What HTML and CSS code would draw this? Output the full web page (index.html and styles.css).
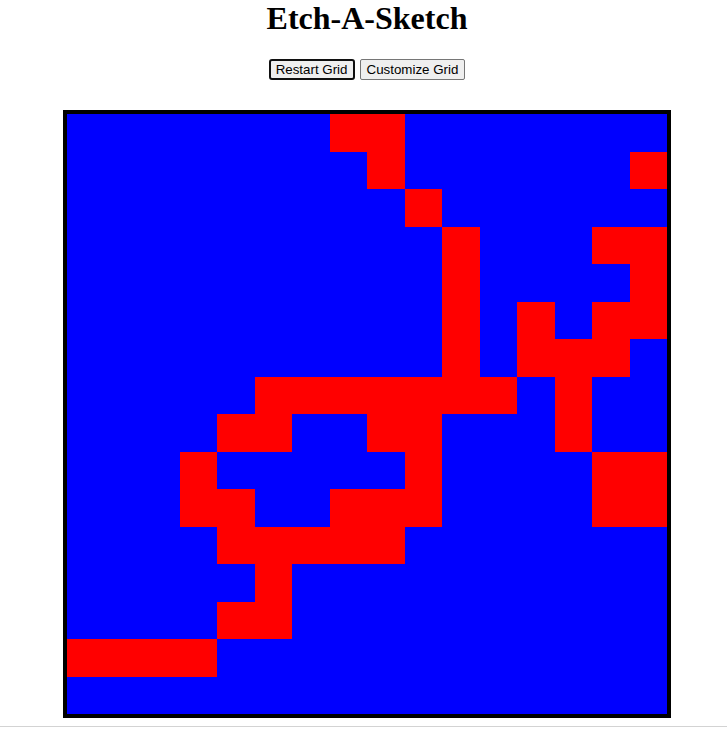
FILE: index.html
```html
<!DOCTYPE html>
<html>
<head>
<meta charset="utf-8">
<title>Etch-A-Sketch</title>
<link rel="stylesheet" href="styles.css">
</head>
<body>
<main class="page">
  <h1 class="title">Etch-A-Sketch</h1>
  <div class="controls">
    <button class="btn btn-focus">Restart Grid</button>
    <button class="btn">Customize Grid</button>
  </div>
  <div class="board">
    <div class="cell"></div><div class="cell"></div><div class="cell"></div><div class="cell"></div><div class="cell"></div><div class="cell"></div><div class="cell"></div><div class="cell red"></div><div class="cell red"></div><div class="cell"></div><div class="cell"></div><div class="cell"></div><div class="cell"></div><div class="cell"></div><div class="cell"></div><div class="cell"></div>
    <div class="cell"></div><div class="cell"></div><div class="cell"></div><div class="cell"></div><div class="cell"></div><div class="cell"></div><div class="cell"></div><div class="cell"></div><div class="cell red"></div><div class="cell"></div><div class="cell"></div><div class="cell"></div><div class="cell"></div><div class="cell"></div><div class="cell"></div><div class="cell red"></div>
    <div class="cell"></div><div class="cell"></div><div class="cell"></div><div class="cell"></div><div class="cell"></div><div class="cell"></div><div class="cell"></div><div class="cell"></div><div class="cell"></div><div class="cell red"></div><div class="cell"></div><div class="cell"></div><div class="cell"></div><div class="cell"></div><div class="cell"></div><div class="cell"></div>
    <div class="cell"></div><div class="cell"></div><div class="cell"></div><div class="cell"></div><div class="cell"></div><div class="cell"></div><div class="cell"></div><div class="cell"></div><div class="cell"></div><div class="cell"></div><div class="cell red"></div><div class="cell"></div><div class="cell"></div><div class="cell"></div><div class="cell red"></div><div class="cell red"></div>
    <div class="cell"></div><div class="cell"></div><div class="cell"></div><div class="cell"></div><div class="cell"></div><div class="cell"></div><div class="cell"></div><div class="cell"></div><div class="cell"></div><div class="cell"></div><div class="cell red"></div><div class="cell"></div><div class="cell"></div><div class="cell"></div><div class="cell"></div><div class="cell red"></div>
    <div class="cell"></div><div class="cell"></div><div class="cell"></div><div class="cell"></div><div class="cell"></div><div class="cell"></div><div class="cell"></div><div class="cell"></div><div class="cell"></div><div class="cell"></div><div class="cell red"></div><div class="cell"></div><div class="cell red"></div><div class="cell"></div><div class="cell red"></div><div class="cell red"></div>
    <div class="cell"></div><div class="cell"></div><div class="cell"></div><div class="cell"></div><div class="cell"></div><div class="cell"></div><div class="cell"></div><div class="cell"></div><div class="cell"></div><div class="cell"></div><div class="cell red"></div><div class="cell"></div><div class="cell red"></div><div class="cell red"></div><div class="cell red"></div><div class="cell"></div>
    <div class="cell"></div><div class="cell"></div><div class="cell"></div><div class="cell"></div><div class="cell"></div><div class="cell red"></div><div class="cell red"></div><div class="cell red"></div><div class="cell red"></div><div class="cell red"></div><div class="cell red"></div><div class="cell red"></div><div class="cell"></div><div class="cell red"></div><div class="cell"></div><div class="cell"></div>
    <div class="cell"></div><div class="cell"></div><div class="cell"></div><div class="cell"></div><div class="cell red"></div><div class="cell red"></div><div class="cell"></div><div class="cell"></div><div class="cell red"></div><div class="cell red"></div><div class="cell"></div><div class="cell"></div><div class="cell"></div><div class="cell red"></div><div class="cell"></div><div class="cell"></div>
    <div class="cell"></div><div class="cell"></div><div class="cell"></div><div class="cell red"></div><div class="cell"></div><div class="cell"></div><div class="cell"></div><div class="cell"></div><div class="cell"></div><div class="cell red"></div><div class="cell"></div><div class="cell"></div><div class="cell"></div><div class="cell"></div><div class="cell red"></div><div class="cell red"></div>
    <div class="cell"></div><div class="cell"></div><div class="cell"></div><div class="cell red"></div><div class="cell red"></div><div class="cell"></div><div class="cell"></div><div class="cell red"></div><div class="cell red"></div><div class="cell red"></div><div class="cell"></div><div class="cell"></div><div class="cell"></div><div class="cell"></div><div class="cell red"></div><div class="cell red"></div>
    <div class="cell"></div><div class="cell"></div><div class="cell"></div><div class="cell"></div><div class="cell red"></div><div class="cell red"></div><div class="cell red"></div><div class="cell red"></div><div class="cell red"></div><div class="cell"></div><div class="cell"></div><div class="cell"></div><div class="cell"></div><div class="cell"></div><div class="cell"></div><div class="cell"></div>
    <div class="cell"></div><div class="cell"></div><div class="cell"></div><div class="cell"></div><div class="cell"></div><div class="cell red"></div><div class="cell"></div><div class="cell"></div><div class="cell"></div><div class="cell"></div><div class="cell"></div><div class="cell"></div><div class="cell"></div><div class="cell"></div><div class="cell"></div><div class="cell"></div>
    <div class="cell"></div><div class="cell"></div><div class="cell"></div><div class="cell"></div><div class="cell red"></div><div class="cell red"></div><div class="cell"></div><div class="cell"></div><div class="cell"></div><div class="cell"></div><div class="cell"></div><div class="cell"></div><div class="cell"></div><div class="cell"></div><div class="cell"></div><div class="cell"></div>
    <div class="cell red"></div><div class="cell red"></div><div class="cell red"></div><div class="cell red"></div><div class="cell"></div><div class="cell"></div><div class="cell"></div><div class="cell"></div><div class="cell"></div><div class="cell"></div><div class="cell"></div><div class="cell"></div><div class="cell"></div><div class="cell"></div><div class="cell"></div><div class="cell"></div>
    <div class="cell"></div><div class="cell"></div><div class="cell"></div><div class="cell"></div><div class="cell"></div><div class="cell"></div><div class="cell"></div><div class="cell"></div><div class="cell"></div><div class="cell"></div><div class="cell"></div><div class="cell"></div><div class="cell"></div><div class="cell"></div><div class="cell"></div><div class="cell"></div>
  </div>
</main>
<div class="rule"></div>
</body>
</html>
```

FILE: styles.css
```css
html, body {
  margin: 0;
  padding: 0;
  background: #ffffff;
}

body {
  font-family: "Liberation Serif", "Times New Roman", serif;
  color: #000000;
  overflow: hidden;
}

.page {
  padding-left: 7px;
  display: flex;
  flex-direction: column;
  align-items: center;
}

.title {
  margin: 0 0 22px 0;
  font-size: 32px;
  line-height: 37px;
  font-weight: bold;
  text-align: center;
}

.controls {
  display: flex;
  justify-content: center;
  gap: 5px;
}

.btn {
  box-sizing: border-box;
  height: 21px;
  padding: 0 6px;
  font-family: "Liberation Sans", Arial, sans-serif;
  font-size: 13.333px;
  color: #000000;
  background: #efefef;
  border: 1px solid #767676;
  border-radius: 2px;
}

.btn-focus {
  border: 2px solid #101010;
  border-radius: 3px;
  padding: 0 5px;
}

.board {
  margin-top: 30px;
  width: 600px;
  height: 600px;
  border: 4px solid #000000;
  display: grid;
  grid-template-columns: repeat(16, 37.5px);
  grid-template-rows: repeat(16, 37.5px);
  background: #0000ff;
}

.cell {
  background: #0000ff;
}

.cell.red {
  background: #ff0000;
}

.rule {
  margin-top: 8px;
  border-top: 1px solid #d3d3d3;
}
```
